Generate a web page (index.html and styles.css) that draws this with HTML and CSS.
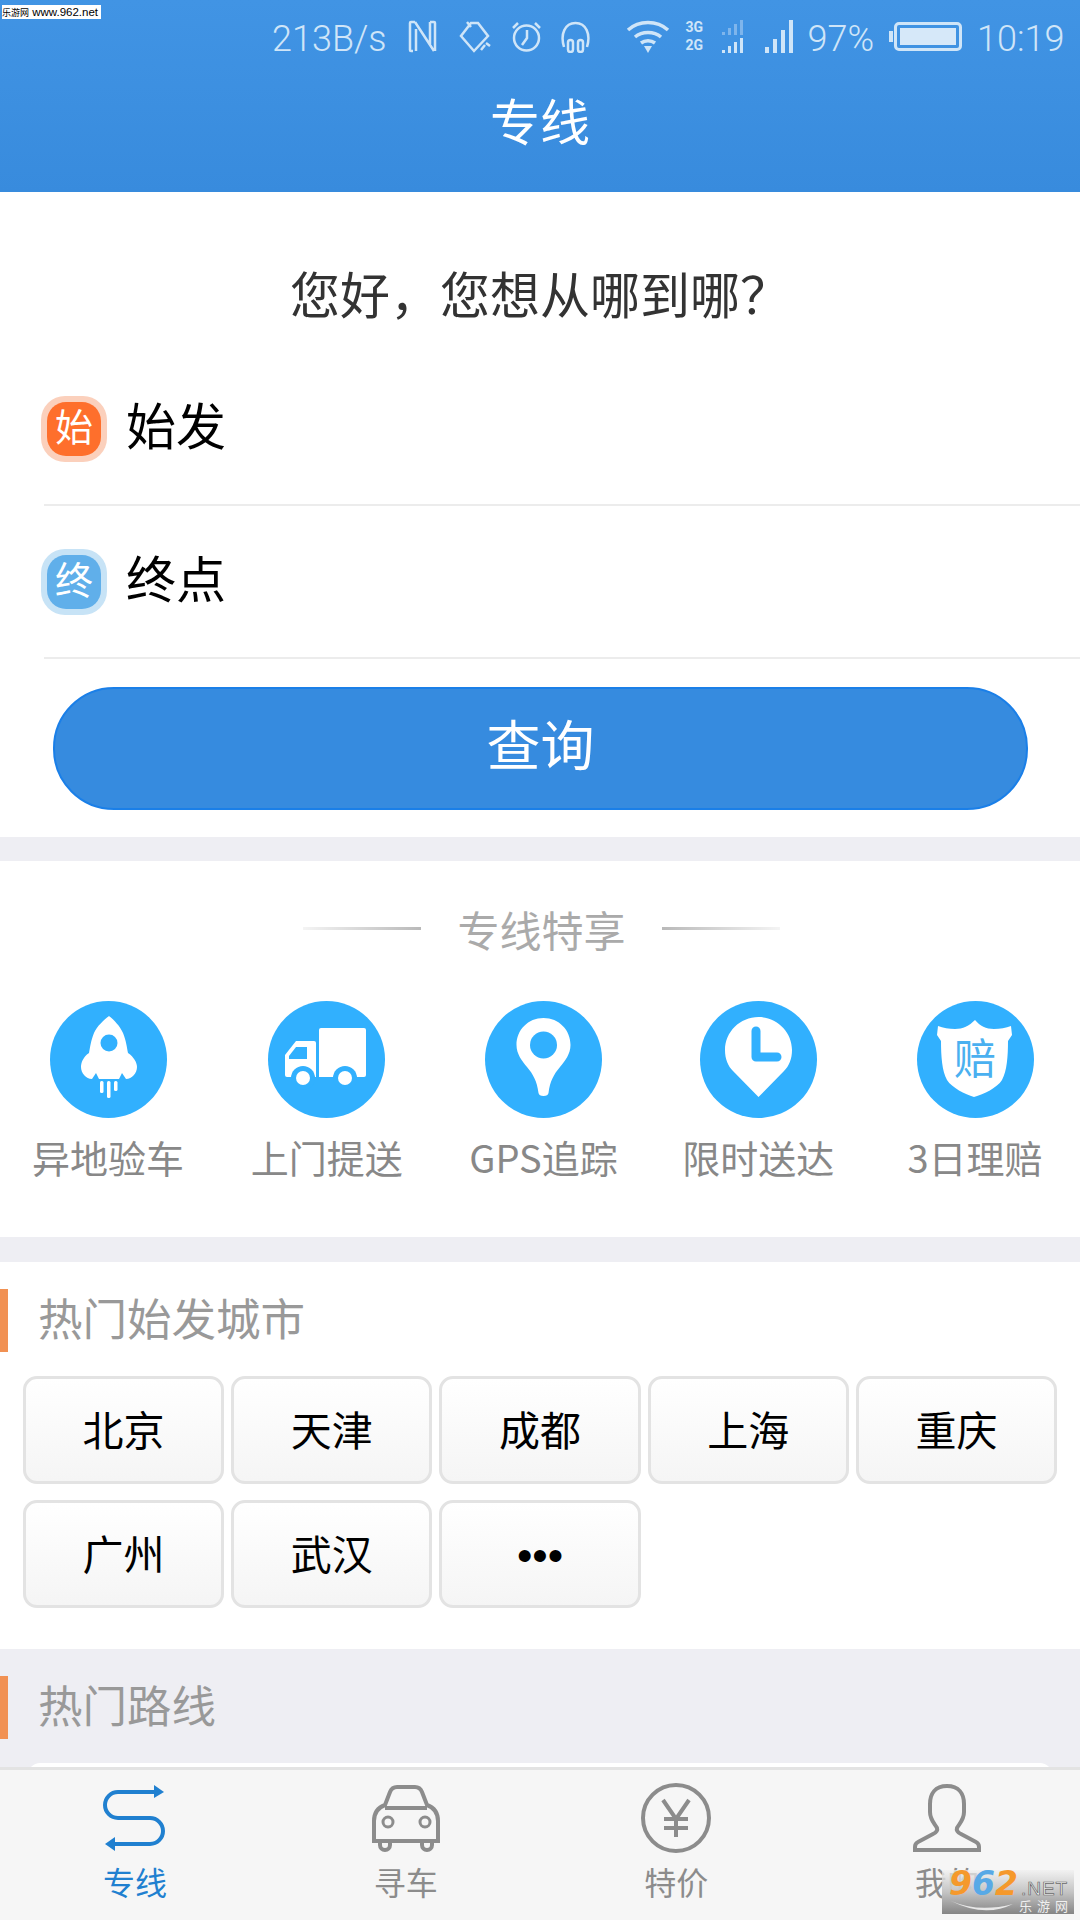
FILE: index.html
```html
<!DOCTYPE html>
<html lang="en">
<head>
    <meta charset="UTF-8">
    <meta name="viewport" content="width=device-width, initial-scale=1.0">
    <title>专线</title>
    <link rel="stylesheet" href="styles.css">
</head>
<body>
<div class="page">
    <header class="header">
        <div class="status">
            <span class="speed">213B/s</span>
            <svg class="st-icon st-nfc" width="29" height="33" viewBox="0 0 29 33"><path d="M7 2H3Q2 2 2 3V30Q2 31 3 31H5M7 2L26 31M8 9V31M22 2V24M22 2H26Q27 2 27 3V31" /></svg>
            <svg class="st-icon st-rotate" width="34" height="33" viewBox="0 0 34 33"><path d="M12 3L2 16L15 31L29 16L19 3ZM8 2L12 7M27 23L31 26M22 30L26 25" /></svg>
            <svg class="st-icon st-alarm" width="31" height="33" viewBox="0 0 31 33"><circle cx="15.5" cy="18" r="12.5" /><path d="M16 10V18L11 25M2 8L7 3M29 8L24 3" /></svg>
            <svg class="st-icon st-head" width="31" height="33" viewBox="0 0 31 33"><path d="M4 27C0 14 5 3 15.500 3S31 14 27 27" /><rect x="8" y="20" width="5" height="12" rx="2.500" /><rect x="18" y="20" width="5" height="12" rx="2.500" /></svg>
            <svg class="st-wifi" width="44" height="33" viewBox="0 0 44 33"><path d="M2 10C13 0 31 0 42 10M9 17C16 11 28 11 35 17M15 23C19 20 25 20 29 23" /><path class="st-fill" d="M18 26H26L22 33Z" /></svg>
            <div class="st-net">
                <div class="st-net-row"><span>3G</span><i class="bars bars-dim"><b class="b1"></b><b class="b2"></b><b class="b3"></b><b class="b4"></b></i></div>
                <div class="st-net-row"><span>2G</span><i class="bars"><b class="b1"></b><b class="b2"></b><b class="b3"></b><b class="b4"></b></i></div>
            </div>
            <i class="bars bars-big"><b class="b1"></b><b class="b2"></b><b class="b3"></b><b class="b4"></b></i>
            <span class="pct">97%</span>
            <div class="battery"><div class="battery-fill"></div></div>
            <span class="clock">10:19</span>
        </div>
        <h1 class="title">专线</h1>
    </header>

    <main class="main">
        <section class="query">
            <div class="question">您好&#xFF0C;您想从哪到哪&#xFF1F;</div>
            <div class="place-row">
                <div class="badge badge-start"><span>始</span></div>
                <span class="place-text">始发</span>
            </div>
            <div class="place-row">
                <div class="badge badge-end"><span>终</span></div>
                <span class="place-text">终点</span>
            </div>
            <button class="query-btn">查询</button>
        </section>

        <section class="perks">
            <div class="perks-title">
                <span class="line line-left"></span>
                <span>专线特享</span>
                <span class="line line-right"></span>
            </div>
            <div class="perks-list">
                <div class="perk">
                    <svg width="117" height="117" viewBox="0 0 117 117">
                        <circle class="perk-bg" cx="58.500" cy="58.500" r="58.500" />
                        <path class="perk-w" d="M59 15C54 19 47 25 44 32C41 39 40 47 39 52C33 56 31 62 31 66C31 72 36 78 42 78L46 72L49 78H69L72 72L76 78C82 78 87 72 87 66C87 62 84 56 78 52C77 47 76 39 73 32C70 25 64 19 59 15Z" />
                        <circle class="perk-b" cx="59" cy="42" r="8.500" />
                        <rect class="perk-w" x="50" y="80" width="3.500" height="12" rx="1.500" />
                        <rect class="perk-w" x="57" y="80" width="3.500" height="17" rx="1.500" />
                        <rect class="perk-w" x="64" y="80" width="3.500" height="10" rx="1.500" />
                    </svg>
                    <div class="perk-label">异地验车</div>
                </div>
                <div class="perk perk-shift">
                    <svg width="117" height="117" viewBox="0 0 117 117">
                        <circle class="perk-bg" cx="58.500" cy="58.500" r="58.500" />
                        <path class="perk-w" d="M53 27H96Q98 27 98 29V74Q98 76 96 76H51V29Q51 27 53 27Z" />
                        <path class="perk-w" d="M28 40H46Q48 40 48 42V76H19Q17 76 17 74V54Z" />
                        <path class="perk-b" d="M28 46H39V58H21V55Z" />
                        <circle class="perk-b" cx="35" cy="77" r="12" />
                        <circle class="perk-b" cx="77" cy="77" r="12" />
                        <circle class="perk-w" cx="35" cy="77" r="7" />
                        <circle class="perk-w" cx="77" cy="77" r="7" />
                    </svg>
                    <div class="perk-label">上门提送</div>
                </div>
                <div class="perk perk-shift">
                    <svg width="117" height="117" viewBox="0 0 117 117">
                        <circle class="perk-bg" cx="58.500" cy="58.500" r="58.500" />
                        <path class="perk-w" d="M58.500 17C43 17 31.500 29 31.500 44C31.500 53 37 60 42 66C48 73 52 80 53.500 92Q54 95 58.500 95T63.500 92C65 80 69 73 75 66C80 60 85.500 53 85.500 44C85.500 29 74 17 58.500 17Z" />
                        <circle class="perk-b" cx="58.500" cy="44" r="13.500" />
                    </svg>
                    <div class="perk-label">GPS追踪</div>
                </div>
                <div class="perk">
                    <svg width="117" height="117" viewBox="0 0 117 117">
                        <circle class="perk-bg" cx="58.500" cy="58.500" r="58.500" />
                        <path class="perk-w" d="M58.500 16C40 16 25 31 25 49C25 58 28 65 33 70L58.500 96L84 70C89 65 92 58 92 49C92 31 77 16 58.500 16Z" />
                        <path class="perk-hand" d="M56 30V56H77" />
                    </svg>
                    <div class="perk-label">限时送达</div>
                </div>
                <div class="perk">
                    <svg width="117" height="117" viewBox="0 0 117 117">
                        <circle class="perk-bg" cx="58.500" cy="58.500" r="58.500" />
                        <path class="perk-w" d="M58 19C52 25 46 28 38 28C32 28 26 27 21 25L20 34L24 40C24 55 25 70 30 79C35 87 48 93 57 96C67 93 80 87 85 79C90 70 91 55 91 40L95 34L94 25C89 27 83 28 77 28C69 28 63 25 58 19Z" />
                        <text class="perk-text" x="58" y="73">赔</text>
                    </svg>
                    <div class="perk-label">3日理赔</div>
                </div>
            </div>
        </section>

        <section class="cities">
            <div class="sec-head"><span class="sec-bar"></span><span class="sec-text">热门始发城市</span></div>
            <div class="chips">
                <div class="chip">北京</div>
                <div class="chip">天津</div>
                <div class="chip">成都</div>
                <div class="chip">上海</div>
                <div class="chip">重庆</div>
                <div class="chip">广州</div>
                <div class="chip">武汉</div>
                <div class="chip chip-more">•••</div>
            </div>
        </section>

        <section class="routes">
            <div class="sec-head"><span class="sec-bar"></span><span class="sec-text">热门路线</span></div>
            <div class="route-card"></div>
        </section>
    </main>

    <nav class="tabs">
        <div class="tab tab-active">
            <div class="tab-icon">
                <svg width="64" height="66" viewBox="0 0 64 66">
                    <path class="ti-line ti-blue" d="M52 7H15A13 13 0 0 0 15 33H47A13 13 0 0 1 47 59H12" />
                    <path class="ti-blue-fill" d="M51 0L61 7L51 13Z" />
                    <path class="ti-blue-fill" d="M12 52L2 59L12 66Z" />
                </svg>
            </div>
            <div class="tab-label">专线</div>
        </div>
        <div class="tab">
            <div class="tab-icon">
                <svg width="68" height="67" viewBox="0 0 68 67">
                    <path class="ti-line" d="M13 20L18 7Q20 2 25 2H43Q48 2 50 7L55 20Q66 24 66 36V56H2V36Q2 24 13 20Z" />
                    <path class="ti-line" d="M13 23H55M8 56V60A5 5 0 0 0 18 60V56M50 56V60A5 5 0 0 0 60 60V56" />
                    <circle class="ti-line ti-thin" cx="16" cy="37" r="5" />
                    <circle class="ti-line ti-thin" cx="53" cy="37" r="5" />
                </svg>
            </div>
            <div class="tab-label">寻车</div>
        </div>
        <div class="tab">
            <div class="tab-icon">
                <svg width="70" height="70" viewBox="0 0 70 70">
                    <circle class="ti-line" cx="35" cy="35" r="33" />
                    <path class="ti-line" d="M22 17L35 36L48 17M35 36V54M23 36H47M23 45H47" />
                </svg>
            </div>
            <div class="tab-label">特价</div>
        </div>
        <div class="tab">
            <div class="tab-icon">
                <svg width="68" height="68" viewBox="0 0 68 68">
                    <path class="ti-line" d="M34 2C22 2 17 10 17 20V28C17 36 22 40 24 44C25 47 22 49 20 50L5 58C3 59 2 61 2 63V66H66V63C66 61 65 59 63 58L48 50C46 49 43 47 44 44C46 40 51 36 51 28V20C51 10 46 2 34 2Z" />
                </svg>
            </div>
            <div class="tab-label">我的</div>
        </div>
    </nav>

    <div class="mark-top"><span class="mark-cn">乐游网</span> www.962.net</div>

    <div class="mark-bottom">
        <div class="mark-row1"><span class="m-o">9</span><span class="m-b">6</span><span class="m-o">2</span><span class="m-net">.NET</span></div>
        <div class="mark-row2">
            <svg width="66" height="14" viewBox="0 0 66 14"><path d="M2 2Q30 14 64 5Q36 19 2 2Z" /></svg>
            <span>乐游网</span>
        </div>
    </div>
</div>
</body>
</html>
```

FILE: styles.css
```css
* {
    box-sizing: border-box;
}
body {
    margin: 0;
    font-family: "Noto Sans CJK SC", "Noto Sans", sans-serif;
}
.page {
    position: relative;
    width: 1080px;
    height: 1920px;
    overflow: hidden;
    display: flex;
    flex-direction: column;
    background: #fff;
}

/* header + status bar */
.header {
    height: 192px;
    background: linear-gradient(#4194e4, #388bdd);
    flex-shrink: 0;
}
.status {
    height: 66px;
    display: flex;
    align-items: flex-start;
    padding: 20px 0 0 272px;
    color: #cfe5f8;
    font-family: Roboto, sans-serif;
    font-weight: 300;
    font-size: 36px;
}
.status > span {
    line-height: 33px;
    height: 33px;
    margin-top: 3px;
}
.st-icon {
    fill: none;
    stroke: #cfe5f8;
    stroke-width: 2.500;
}
.st-nfc { margin-left: 21px; }
.st-rotate { margin-left: 22px; }
.st-alarm { margin-left: 18px; }
.st-head { margin-left: 18px; }
.st-wifi {
    fill: none;
    stroke: #cfe5f8;
    stroke-width: 3.500;
    margin-left: 35px;
}
.st-fill {
    fill: #cfe5f8;
    stroke: none;
}
.st-net {
    margin-left: 16px;
    width: 57px;
    height: 33px;
    display: flex;
    flex-direction: column;
    justify-content: space-between;
    font-size: 14px;
    font-weight: 700;
    line-height: 15px;
}
.st-net-row {
    display: flex;
    justify-content: space-between;
    align-items: flex-end;
    height: 15px;
}
.bars {
    display: flex;
    align-items: flex-end;
    gap: 3px;
    height: 15px;
    font-style: normal;
}
.bars b {
    display: block;
    width: 3px;
    background: #cfe5f8;
}
.bars .b1 { height: 3px; }
.bars .b2 { height: 7px; }
.bars .b3 { height: 11px; }
.bars .b4 { height: 15px; }
.bars-dim b {
    background: #7eb5ec;
}
.bars-big {
    margin-left: 22px;
    height: 33px;
    gap: 4px;
}
.bars-big b {
    width: 4px;
}
.bars-big .b1 { height: 6px; }
.bars-big .b2 { height: 14px; }
.bars-big .b3 { height: 23px; }
.bars-big .b4 { height: 33px; }
.pct {
    margin-left: 15px;
}
.battery {
    position: relative;
    width: 68px;
    height: 29px;
    margin: 2px 0 0 20px;
    padding: 3px;
    border: 3px solid #cfe5f8;
    border-radius: 5px;
}
.battery::before {
    content: "";
    position: absolute;
    left: -8px;
    top: 6px;
    width: 4px;
    height: 11px;
    background: #cfe5f8;
}
.battery-fill {
    height: 100%;
    background: #d6e8f9;
}
.clock {
    margin-left: 15px;
}
.title {
    margin: 0;
    height: 112px;
    padding-bottom: 7px;
    display: flex;
    align-items: center;
    justify-content: center;
    color: #fff;
    font-size: 50px;
    font-weight: 400;
}

.main {
    flex: 1;
    min-height: 0;
    overflow: hidden;
}

/* from / to */
.query {
    padding-bottom: 27px;
}
.question {
    height: 161px;
    padding-top: 65px;
    line-height: 70px;
    text-align: center;
    font-size: 50px;
    color: #333;
}
.place-row {
    height: 153px;
    margin-left: 44px;
    display: flex;
    align-items: center;
    border-bottom: 2px solid #ececec;
}
.badge {
    width: 66px;
    height: 66px;
    margin-left: -3px;
    padding: 6px;
    border-radius: 24px;
    flex-shrink: 0;
}
.badge span {
    display: flex;
    width: 100%;
    height: 100%;
    padding-bottom: 7px;
    align-items: center;
    justify-content: center;
    border-radius: 19px;
    color: #fff;
    font-size: 38px;
    line-height: 1;
}
.badge-start { background: #fbd0bc; }
.badge-start span { background: #fe6f2c; }
.badge-end { background: #c7e3f6; }
.badge-end span { background: #60afea; }
.place-text {
    margin-left: 19px;
    padding-bottom: 12px;
    font-size: 50px;
    color: #000;
}
.query-btn {
    display: block;
    width: 975px;
    height: 123px;
    margin: 28px 0 0 53px;
    padding: 0 0 12px;
    background: #368bdf;
    border: 2px solid #1a7fe8;
    border-radius: 61px;
    color: #fff;
    font-family: inherit;
    font-size: 54px;
}

/* perks */
.perks {
    margin-top: 0;
    border-top: 24px solid #eeeef3;
    border-bottom: 25px solid #eeeef3;
    padding: 43px 30px 55px 33px;
}
.perks-title {
    height: 48px;
    display: flex;
    align-items: center;
    justify-content: center;
    gap: 36px;
    font-size: 42px;
    color: #aaa;
}
.line {
    width: 118px;
    height: 3px;
}
.line-left { background: linear-gradient(to right, #f4f4f4, #b9b9b9); }
.line-right { background: linear-gradient(to right, #b9b9b9, #f4f4f4); }
.perks-list {
    display: flex;
    justify-content: space-between;
    margin-top: 49px;
}
.perk {
    width: 150px;
    display: flex;
    flex-direction: column;
    align-items: center;
}
.perk-shift {
    margin-left: 2px;
    margin-right: -2px;
}
.perk svg {
    display: block;
}
.perk-bg, .perk-b { fill: #31b0fe; }
.perk-w { fill: #fff; }
.perk-hand {
    fill: none;
    stroke: #31b0fe;
    stroke-width: 9;
    stroke-linecap: round;
    stroke-linejoin: round;
}
.perk-text {
    fill: #4ab0f0;
    font-size: 42px;
    text-anchor: middle;
}
.perk-label {
    margin-top: 14px;
    line-height: 50px;
    font-size: 38px;
    color: #888;
    white-space: nowrap;
}

/* hot cities */
.cities {
    padding: 27px 23px 41px 0;
}
.sec-head {
    height: 63px;
    display: flex;
    align-items: center;
}
.sec-bar {
    width: 8px;
    height: 63px;
    background: #f19153;
}
.sec-text {
    margin-left: 30px;
    padding-bottom: 9px;
    font-size: 44.500px;
    color: #999;
}
.chips {
    display: grid;
    grid-template-columns: repeat(5, 1fr);
    gap: 16px 7px;
    margin: 24px 0 0 23px;
}
.chip {
    height: 108px;
    padding-bottom: 5px;
    display: flex;
    align-items: center;
    justify-content: center;
    border: 3px solid #e3e3e3;
    border-radius: 14px;
    background: linear-gradient(#fff, #f5f5f5);
    font-size: 41px;
    color: #000;
}
.chip-more {
    padding: 4px 0 0;
    font-family: "Liberation Sans", sans-serif;
    font-size: 44px;
}

/* hot routes */
.routes {
    height: 200px;
    padding-top: 27px;
    background: #eeeef3;
}
.route-card {
    height: 30px;
    margin: 24px 28px 0;
    background: #fff;
    border-radius: 12px 12px 0 0;
}

/* tab bar */
.tabs {
    height: 153px;
    flex-shrink: 0;
    display: flex;
    justify-content: space-between;
    padding: 13px 33px 0 35px;
    border-top: 3px solid #e3e3e3;
    background: #f6f6f6;
}
.tab {
    width: 200px;
    display: flex;
    flex-direction: column;
    align-items: center;
}
.tab-icon {
    height: 70px;
    display: flex;
    align-items: center;
    justify-content: center;
}
.tab-label {
    margin-top: 8px;
    line-height: 40px;
    font-size: 32px;
    color: #8c8c8c;
}
.tab-active .tab-label {
    color: #2080d0;
}
.ti-line {
    fill: none;
    stroke: #8c8c8c;
    stroke-width: 4;
}
.ti-thin {
    stroke-width: 3;
}
.ti-blue {
    stroke: #2080d0;
}
.ti-blue-fill {
    fill: #2080d0;
}

/* watermarks lying over the page */
.mark-top {
    position: absolute;
    left: 2px;
    top: 5px;
    width: 99px;
    height: 14px;
    background: #fff;
    color: #000;
    font-family: "Liberation Sans", sans-serif;
    font-size: 11.500px;
    line-height: 14px;
    white-space: nowrap;
    overflow: hidden;
}
.mark-cn {
    font-family: "Noto Sans CJK SC", sans-serif;
    font-size: 9px;
}
.mark-bottom {
    position: absolute;
    left: 942px;
    top: 1870px;
    width: 132px;
    height: 44px;
    padding-left: 7px;
    background: linear-gradient(rgba(240, 240, 240, 0.7) 0%, #c4c4c4 50%, #858585 100%);
}
.mark-row1 {
    display: flex;
    align-items: baseline;
    height: 27px;
    line-height: 28px;
    font-family: "DejaVu Sans", sans-serif;
    font-weight: 700;
    font-style: italic;
    font-size: 33px;
}
.m-o { color: #f5992c; }
.m-b { color: #58a9e6; }
.m-net {
    margin-left: 3px;
    font-family: "Liberation Sans", sans-serif;
    font-size: 19px;
    font-style: normal;
    font-weight: 400;
    letter-spacing: 1px;
    color: #f8f8f8;
    -webkit-text-stroke: 0.700px #666;
}
.mark-row2 {
    display: flex;
    align-items: center;
    height: 17px;
    color: #f0f0f0;
    font-size: 13px;
    letter-spacing: 5px;
}
.mark-row2 svg {
    fill: #e8e8e8;
    margin-right: 4px;
    flex-shrink: 0;
}
```
